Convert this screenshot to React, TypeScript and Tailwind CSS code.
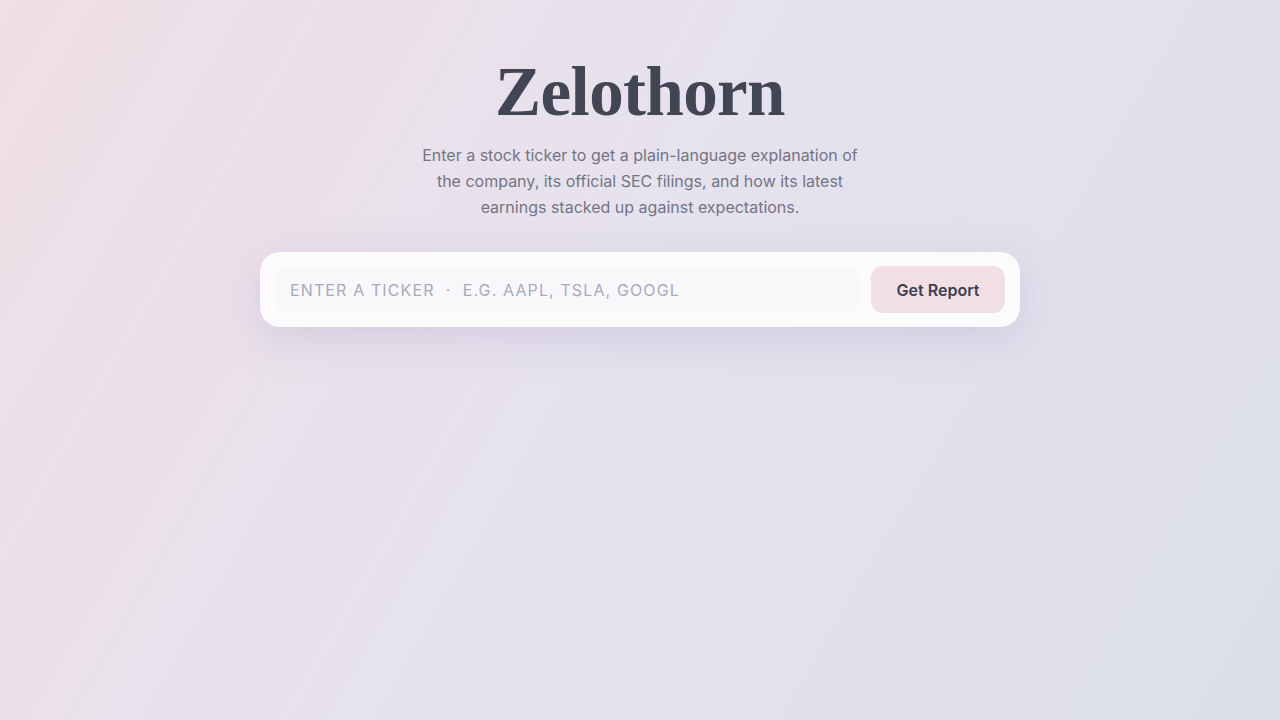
export default function App() {
	return (
		<div className="min-h-screen w-full bg-[linear-gradient(120deg,#f0dfe5_0%,#e6e2ee_45%,#dcdfea_100%)] font-['Inter','Noto_Sans',sans-serif]">
			<div className="flex flex-col items-center pt-[52px]">
				<h1 className="font-['Liberation_Serif',serif] text-[69px] leading-[80px] font-bold tracking-[-0.6px] text-[#424553]">
					Zelothorn
				</h1>
				<p className="mt-[10px] max-w-[448px] text-center text-base leading-[26px] text-[#737584]">
					Enter a stock ticker to get a plain-language explanation of
					the company, its official SEC filings, and how its latest
					earnings stacked up against expectations.
				</p>

				{/* Search card */}
				<div className="mt-[32px] flex w-[760px] items-center gap-3 rounded-[20px] bg-white/85 px-[15px] py-[14px] shadow-[0_10px_40px_rgba(150,140,190,0.25)]">
					<input
						type="text"
						placeholder="ENTER A TICKER  ·  E.G. AAPL, TSLA, GOOGL"
						className="h-[46px] flex-1 rounded-xl bg-[#f6f6f9]/70 px-[15px] text-base tracking-[0.07em] text-[#424553] outline-none placeholder:text-[#a9aabb]"
					/>
					<button className="h-[47px] w-[134px] rounded-xl bg-[#f1dfe5] text-base font-semibold text-[#3b3f50]">
						Get Report
					</button>
				</div>
			</div>
		</div>
	);
}
